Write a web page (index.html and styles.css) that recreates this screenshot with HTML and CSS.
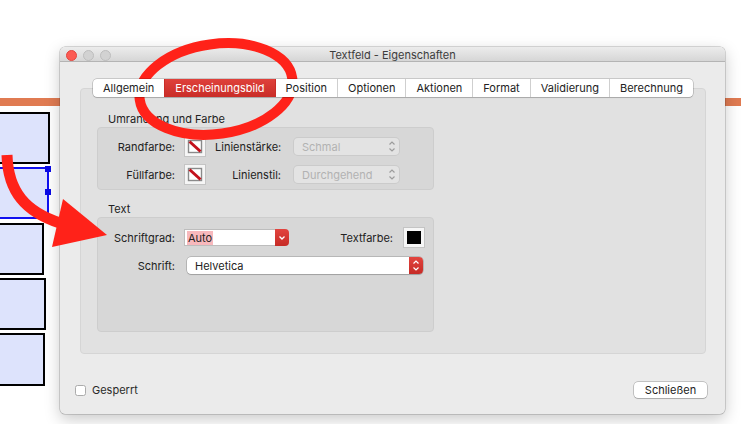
FILE: index.html
```html
<!DOCTYPE html>
<html lang="de">
<head>
    <meta charset="UTF-8">
    <title>Textfeld - Eigenschaften</title>
    <link rel="stylesheet" href="styles.css">
</head>
<body>
<div class="desk">
    <div class="page-bar"></div>
    <div class="field f1"></div>
    <div class="field f2"><span class="handle h-top"></span><span class="handle h-mid"></span></div>
    <div class="field f3"></div>
    <div class="field f4"></div>
    <div class="field f5"></div>

    <div class="window">
        <div class="titlebar">
            <div class="lights">
                <span class="light close"></span>
                <span class="light"></span>
                <span class="light"></span>
            </div>
            <div class="title">Textfeld - Eigenschaften</div>
        </div>

        <div class="tabview">
            <div class="tabs">
                <div class="tab">Allgemein</div>
                <div class="tab active">Erscheinungsbild</div>
                <div class="tab">Position</div>
                <div class="tab">Optionen</div>
                <div class="tab">Aktionen</div>
                <div class="tab">Format</div>
                <div class="tab">Validierung</div>
                <div class="tab">Berechnung</div>
            </div>

            <div class="tab-content">
                <div class="group-label">Umrandung und Farbe</div>
                <div class="group g-border">
                    <div class="row">
                        <span class="lbl">Randfarbe:</span>
                        <span class="swatch">
                            <svg width="22" height="21" viewBox="0 0 22 21"><rect x="0.5" y="0.5" width="21" height="20" fill="#f6f6f6" stroke="#c4c4c4"/><rect x="4.5" y="4.5" width="13" height="12" fill="#fff" stroke="#8a8a8a" stroke-width="1.4"/><path d="M5.5 5.5 L16.5 15.5" stroke="#c3121c" stroke-width="3"/></svg>
                        </span>
                        <span class="lbl lbl2">Linienstärke:</span>
                        <div class="popup disabled">
                            <span class="value">Schmal</span>
                            <svg class="stepper" width="14" height="17" viewBox="0 0 14 17"><path d="M4.5 6.5 L7 4 L9.5 6.5 M4.5 10.5 L7 13 L9.5 10.5" fill="none" stroke="#9c9c9c" stroke-width="1.2"/></svg>
                        </div>
                    </div>
                    <div class="row">
                        <span class="lbl">Füllfarbe:</span>
                        <span class="swatch">
                            <svg width="22" height="21" viewBox="0 0 22 21"><rect x="0.5" y="0.5" width="21" height="20" fill="#f6f6f6" stroke="#c4c4c4"/><rect x="4.5" y="4.5" width="13" height="12" fill="#fff" stroke="#8a8a8a" stroke-width="1.4"/><path d="M5.5 5.5 L16.5 15.5" stroke="#c3121c" stroke-width="3"/></svg>
                        </span>
                        <span class="lbl lbl2">Linienstil:</span>
                        <div class="popup disabled">
                            <span class="value">Durchgehend</span>
                            <svg class="stepper" width="14" height="17" viewBox="0 0 14 17"><path d="M4.5 6.5 L7 4 L9.5 6.5 M4.5 10.5 L7 13 L9.5 10.5" fill="none" stroke="#9c9c9c" stroke-width="1.2"/></svg>
                        </div>
                    </div>
                </div>

                <div class="group-label">Text</div>
                <div class="group g-text">
                    <div class="row">
                        <span class="lbl">Schriftgrad:</span>
                        <div class="combo">
                            <span class="combo-text"><span class="selected-text">Auto</span></span>
                            <span class="combo-btn">
                                <svg width="14" height="17" viewBox="0 0 14 17"><path d="M4.5 7.5 L7 10 L9.5 7.5" fill="none" stroke="#fff" stroke-width="1.3"/></svg>
                            </span>
                        </div>
                        <span class="spacer"></span>
                        <span class="lbl-plain">Textfarbe:</span>
                        <span class="swatch">
                            <svg width="22" height="21" viewBox="0 0 22 21"><rect x="0.5" y="0.5" width="21" height="20" fill="#f6f6f6" stroke="#c4c4c4"/><rect x="4" y="4" width="14" height="13" fill="#000"/></svg>
                        </span>
                    </div>
                    <div class="row">
                        <span class="lbl lbl-font">Schrift:</span>
                        <div class="popup wide">
                            <span class="value">Helvetica</span>
                            <span class="popup-btn">
                                <svg width="14" height="17" viewBox="0 0 14 17"><path d="M4.5 6.5 L7 4 L9.5 6.5 M4.5 10.5 L7 13 L9.5 10.5" fill="none" stroke="#fff" stroke-width="1.2"/></svg>
                            </span>
                        </div>
                    </div>
                </div>
            </div>
        </div>

        <div class="footer">
            <label class="check"><span class="box"></span>Gesperrt</label>
            <button class="btn">Schließen</button>
        </div>
    </div>

    <!-- rote Markierungen über dem Screenshot -->
    <svg class="marks" width="741" height="424" viewBox="0 0 741 424">
        <ellipse cx="216" cy="89" rx="77" ry="45" transform="rotate(-8 216 89)" fill="none" stroke="#ff2219" stroke-width="10"/>
        <path d="M7 155 C 8 192, 26 212, 60 223" fill="none" stroke="#ff2219" stroke-width="11"/>
        <polygon points="63,199 107,235 52,247" fill="#ff2219"/>
    </svg>
</div>
</body>
</html>
```

FILE: styles.css
```css
* {
    box-sizing: border-box;
}

body {
    margin: 0;
    width: 741px;
    height: 424px;
    overflow: hidden;
    background: #fff;
    font-family: "Inter", "Liberation Sans", sans-serif;
    font-size: 11px;
    color: #222;
}

.desk {
    position: relative;
    width: 741px;
    height: 424px;
}

/* Seite im Hintergrund */
.page-bar {
    position: absolute;
    left: 0;
    right: 0;
    top: 98px;
    height: 8px;
    background: #e07b52;
}

.field {
    position: absolute;
    left: -10px;
    background: #dde3fc;
    border: 2.5px solid #000;
}

.f1 { top: 112px; width: 60px; height: 52px; }
.f2 { top: 167px; width: 59px; height: 52px; border: 2px solid #1010f0; }
.f3 { top: 223px; width: 54px; height: 52px; }
.f4 { top: 278px; width: 56px; height: 52px; }
.f5 { top: 333px; width: 55px; height: 53px; }

.handle {
    position: absolute;
    right: -4px;
    width: 6px;
    height: 6px;
    background: #0a0ae6;
}

.h-top { top: -3px; }
.h-mid { top: 20px; }

/* Fenster */
.window {
    position: absolute;
    left: 60px;
    top: 47px;
    width: 665px;
    height: 367px;
    background: #ebebeb;
    border-radius: 5px;
    box-shadow: 0 0 0 0.5px rgba(0, 0, 0, 0.28), 0 5px 16px rgba(0, 0, 0, 0.22);
    display: flex;
    flex-direction: column;
    overflow: hidden;
}

.titlebar {
    height: 15px;
    display: grid;
    grid-template-columns: 1fr auto 1fr;
    align-items: center;
    background: linear-gradient(#ececec, #d6d6d6);
    border-bottom: 1px solid #b4b4b4;
}

.lights {
    display: flex;
    gap: 6px;
    padding-left: 6px;
    padding-top: 2px;
}

.light {
    width: 11px;
    height: 11px;
    border-radius: 50%;
    background: #d2d2d2;
    border: 0.5px solid #bdbdbd;
}

.light.close {
    background: #fc5b53;
    border-color: #e2463f;
}

.title {
    color: #3c3c3c;
    font-size: 11px;
    padding-top: 1px;
}

.tabview {
    margin: 17px 19px 0 20px;
    display: flex;
    flex-direction: column;
    align-items: center;
}

.tabs {
    display: flex;
    height: 18px;
    background: #fff;
    border-radius: 4px;
    box-shadow: 0 0 0 0.5px rgba(0, 0, 0, 0.3), 0 1px 1px rgba(0, 0, 0, 0.12);
    margin-bottom: -9px;
    position: relative;
    z-index: 1;
    overflow: hidden;
}

.tab {
    padding: 0 10px;
    line-height: 18px;
    border-left: 1px solid #cfcfcf;
    color: #222;
}

.tab:first-child {
    border-left: none;
}

.tab.active {
    background: linear-gradient(#df413b, #c92d28);
    color: #fff;
    border-left-color: #c92d28;
}

.tab.active + .tab {
    border-left-color: #c92d28;
}

.tab-content {
    width: 100%;
    height: 266px;
    background: #e1e1e1;
    border: 1px solid #d5d5d5;
    border-radius: 4px;
    padding: 24px 0 0 16px;
}

.group-label {
    padding-left: 11px;
    line-height: 13px;
    margin-bottom: 1px;
}

.group {
    width: 337px;
    background: #d7d7d7;
    border: 1px solid #cdcdcd;
    border-radius: 4px;
    display: flex;
    flex-direction: column;
    gap: 7px;
}

.g-border {
    height: 63px;
    padding-top: 8px;
    margin-bottom: 13px;
}

.g-text {
    height: 115px;
    padding-top: 9px;
    padding-right: 8px;
}

.row {
    display: flex;
    align-items: center;
    height: 21px;
}

.lbl {
    width: 77px;
    text-align: right;
    margin-right: 9px;
}

.lbl2 {
    width: 66px;
    margin-left: 9px;
    margin-right: 13px;
}

.lbl-font {
    margin-right: 12px;
}

.lbl-plain {
    margin-right: 10px;
}

.swatch {
    display: flex;
    width: 22px;
    height: 21px;
}

.spacer {
    flex: 1;
}

.popup {
    width: 105px;
    height: 17px;
    display: flex;
    align-items: center;
    justify-content: space-between;
    background: #fff;
    border-radius: 4px;
    box-shadow: 0 0 0 0.5px rgba(0, 0, 0, 0.3), 0 1px 1px rgba(0, 0, 0, 0.12);
    padding-left: 8px;
}

.popup.disabled {
    background: #e3e3e3;
    box-shadow: 0 0 0 1px #cbcbcb;
    color: #b2b2b2;
}

.popup.wide {
    width: 236px;
    color: #222;
}

.popup-btn {
    display: flex;
    width: 14px;
    height: 17px;
    background: linear-gradient(#e2443e, #c62b26);
    border-radius: 0 4px 4px 0;
}

.combo {
    width: 105px;
    height: 17px;
    display: flex;
    align-items: stretch;
}

.combo-text {
    flex: 1;
    background: #fff;
    border: 1px solid #bdbdbd;
    border-right: none;
    padding-left: 2px;
    display: flex;
    align-items: center;
}

.selected-text {
    background: #f7b8bc;
    padding: 0 1px;
    line-height: 14px;
}

.combo-btn {
    display: flex;
    width: 14px;
    background: linear-gradient(#e2443e, #c62b26);
    border-radius: 0 4px 4px 0;
}

.footer {
    margin-top: 28px;
    height: 16px;
    display: flex;
    align-items: center;
    justify-content: space-between;
    padding: 0 18px 0 15px;
}

.check {
    display: flex;
    align-items: center;
    color: #2a2a2a;
}

.box {
    width: 11px;
    height: 11px;
    background: #fff;
    border: 1px solid #ababab;
    border-radius: 2.5px;
    margin-right: 6px;
}

.btn {
    width: 73px;
    height: 16px;
    padding: 0;
    font-family: inherit;
    font-size: 11px;
    color: #222;
    background: #fff;
    border: none;
    border-radius: 4px;
    box-shadow: 0 0 0 0.5px rgba(0, 0, 0, 0.35), 0 1px 1px rgba(0, 0, 0, 0.12);
}

.marks {
    position: absolute;
    left: 0;
    top: 0;
    pointer-events: none;
}
```
